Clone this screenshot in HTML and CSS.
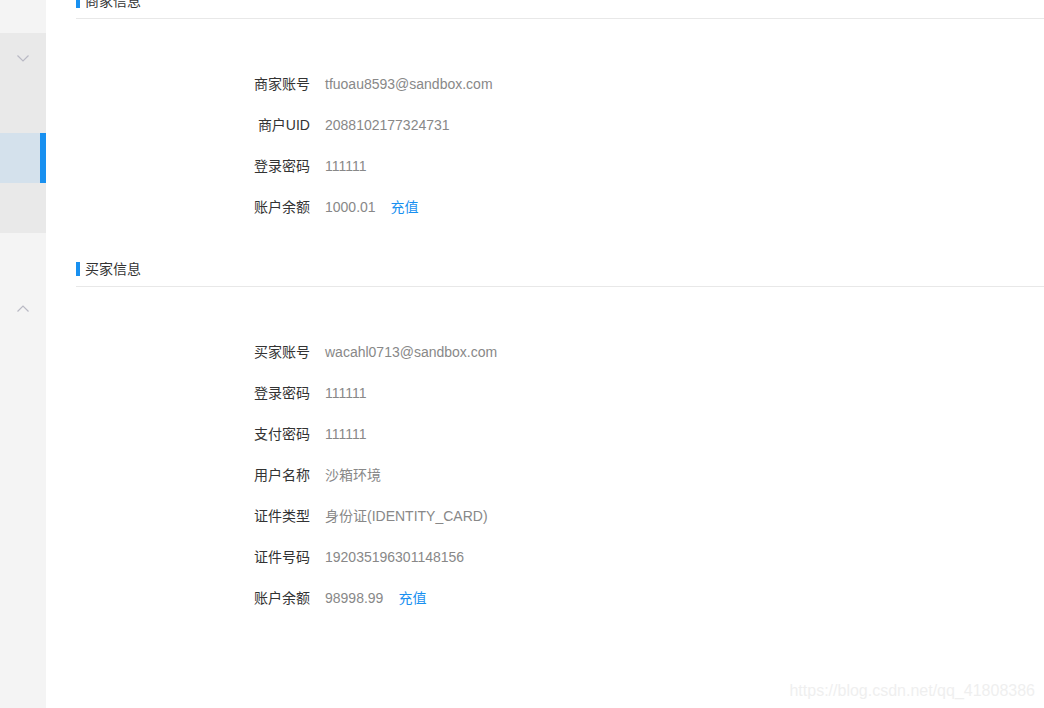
FILE: index.html
```html
<!DOCTYPE html>
<html lang="zh-CN">
<head>
  <meta charset="UTF-8" />
  <meta name="viewport" content="width=device-width, initial-scale=1.0"/>
  <title>沙箱账号</title>
  <link rel="stylesheet" href="styles.css">
</head>
<body>
  <aside class="sidebar">
    <div class="nav-item nav-cut"></div>
    <div class="nav-group">
      <div class="nav-item nav-head">
        <svg class="chevron" width="12" height="7" viewBox="0 0 12 7"><path d="M0.5 0.5 L6 6 L11.5 0.5" fill="none" stroke="#b9b9c4" stroke-width="1.2"/></svg>
      </div>
      <div class="nav-item"></div>
      <div class="nav-item active"></div>
      <div class="nav-item"></div>
    </div>
    <div class="nav-item"></div>
    <div class="nav-item nav-head">
      <svg class="chevron" width="12" height="7" viewBox="0 0 12 7"><path d="M0.5 6.5 L6 1 L11.5 6.5" fill="none" stroke="#b9b9c4" stroke-width="1.2"/></svg>
    </div>
  </aside>

  <main class="content">
    <section class="panel first">
      <h2 class="panel-title">商家信息</h2>
      <div class="rows">
        <div class="row"><span class="label">商家账号</span><span class="value">tfuoau8593@sandbox.com</span></div>
        <div class="row"><span class="label">商户UID</span><span class="value">2088102177324731</span></div>
        <div class="row"><span class="label">登录密码</span><span class="value">111111</span></div>
        <div class="row"><span class="label">账户余额</span><span class="value">1000.01<a class="recharge" href="#">充值</a></span></div>
      </div>
    </section>

    <section class="panel">
      <h2 class="panel-title">买家信息</h2>
      <div class="rows">
        <div class="row"><span class="label">买家账号</span><span class="value">wacahl0713@sandbox.com</span></div>
        <div class="row"><span class="label">登录密码</span><span class="value">111111</span></div>
        <div class="row"><span class="label">支付密码</span><span class="value">111111</span></div>
        <div class="row"><span class="label">用户名称</span><span class="value">沙箱环境</span></div>
        <div class="row"><span class="label">证件类型</span><span class="value">身份证(IDENTITY_CARD)</span></div>
        <div class="row"><span class="label">证件号码</span><span class="value">192035196301148156</span></div>
        <div class="row"><span class="label">账户余额</span><span class="value">98998.99<a class="recharge" href="#">充值</a></span></div>
      </div>
    </section>

    <div class="watermark">https://blog.csdn.net/qq_41808386</div>
  </main>
</body>
</html>
```

FILE: styles.css
```css
html, body {
  height: 100%;
}

body {
  margin: 0;
  display: flex;
  overflow: hidden;
  font-family: "Liberation Sans", "Noto Sans CJK SC", sans-serif;
  font-size: 14px;
  color: #333;
  background: #fff;
}

.sidebar {
  width: 46px;
  flex-shrink: 0;
  background: #f4f4f4;
}

.nav-item {
  height: 50px;
  display: flex;
  align-items: center;
  justify-content: center;
  box-sizing: border-box;
}

.nav-cut {
  height: 33px;
}

.nav-group {
  background: #e9e9e9;
}

.nav-item.active {
  background: #d4e1ec;
  border-right: 6px solid #1890f0;
}

.chevron {
  display: block;
}

.content {
  flex: 1;
  position: relative;
  padding-left: 30px;
}

.panel.first {
  margin-top: -9px;
}

.panel-title {
  margin: 0;
  font-size: 14px;
  font-weight: normal;
  line-height: 20px;
  padding-bottom: 7px;
  border-bottom: 1px solid #e8e8e8;
  display: flex;
  align-items: center;
}

.panel-title::before {
  content: "";
  width: 4px;
  height: 14px;
  margin-right: 5px;
  background: #1890f0;
}

.rows {
  padding: 45px 0 31px;
}

.row {
  display: flex;
  line-height: 41px;
}

.label {
  width: 234px;
  text-align: right;
  color: #333;
}

.value {
  margin-left: 15px;
  color: #888;
}

.recharge {
  margin-left: 15px;
  color: #1890f0;
  text-decoration: none;
}

.watermark {
  position: absolute;
  right: 9px;
  bottom: 8px;
  font-size: 16px;
  color: #efefef;
}
```
